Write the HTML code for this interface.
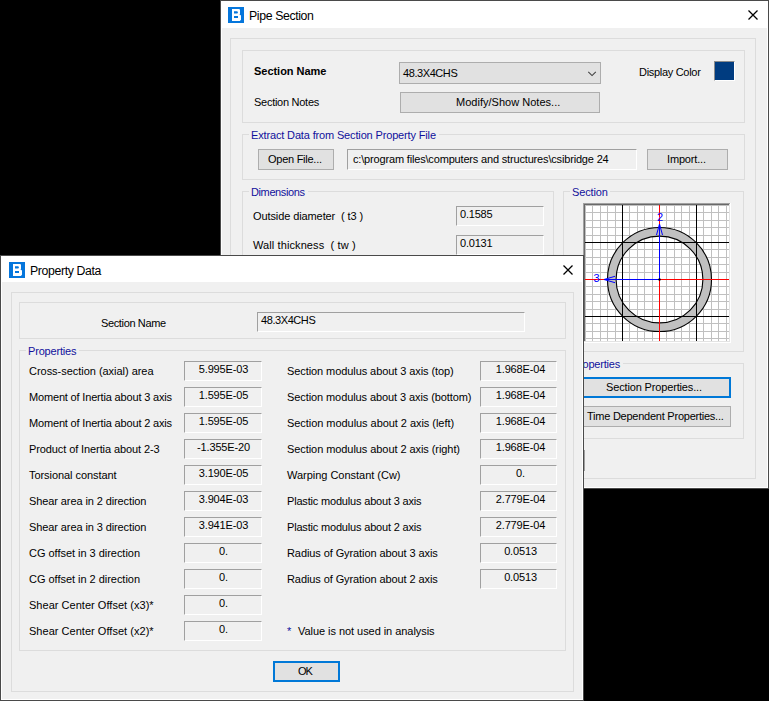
<!DOCTYPE html><html><head><meta charset="utf-8"><style>
*{box-sizing:border-box}
html,body{margin:0;padding:0;width:769px;height:701px;overflow:hidden;background:#000;position:relative}
div{position:absolute}
.t{font-family:"Liberation Sans",sans-serif;font-size:11px;line-height:13px;white-space:pre;color:#000}
.g{border:1px solid #dcdcdc}
.btn{background:#e1e1e1;border:1px solid #adadad}
.def{background:#e1e1e1;border:2px solid #0078d7}
.sunk{background:#f0f0f0;border-top:1px solid #a0a0a0;border-left:1px solid #a0a0a0;border-bottom:1px solid #fff;border-right:1px solid #fff}
.lbgap{background:#f0f0f0;height:3px}
</style></head><body>
<div class="" style="left:220px;top:0px;width:549px;height:489px;background:#fff;border:1px solid #4a4a4a"></div>
<div class="" style="left:222px;top:28px;width:545px;height:459px;background:#f0f0f0"></div>
<svg style="position:absolute;left:228px;top:7px" width="16" height="16" viewBox="0 0 16 16"><rect width="16" height="16" fill="#0576dc"/><path fill="#fff" fill-rule="evenodd" d="M4 2H11.2L12 2.8V6.8L11.5 7.4L13 8.6V12.8L11.8 14H4ZM6 4.3H9.3L10 5.45L9.3 6.6H6ZM6 9.1H10V11H6Z"/></svg>
<div class="t" style="left:249px;top:10px;font-size:12.3px;letter-spacing:-0.38px;">Pipe Section</div>
<svg style="position:absolute;left:747px;top:9px" width="12" height="12" viewBox="0 0 12 12"><path d="M1.5 1.5L10.5 10.5M10.5 1.5L1.5 10.5" stroke="#000" stroke-width="1.25"/></svg>
<div class="g" style="left:230px;top:38px;width:526px;height:441px;"></div>
<div class="g" style="left:242px;top:50px;width:503px;height:73px;"></div>
<div class="t" style="left:254px;top:65px;font-weight:700;letter-spacing:-0.03px;">Section Name</div>
<div class="t" style="left:254px;top:96px;letter-spacing:-0.27px;">Section Notes</div>
<div class="" style="left:399px;top:62px;width:202px;height:22px;background:#e1e1e1;border:1px solid #adadad"></div>
<div class="t" style="left:403px;top:67px;letter-spacing:-0.42px;">48.3X4CHS</div>
<svg style="position:absolute;left:586px;top:70px" width="12" height="8" viewBox="0 0 12 8"><path d="M2.3 1.9L6.05 5.6L9.8 1.9" fill="none" stroke="#404040" stroke-width="1.05"/></svg>
<div class="btn" style="left:400px;top:92px;width:200px;height:21px;"></div>
<div class="t" style="left:456px;top:96px;letter-spacing:0.02px;">Modify/Show Notes...</div>
<div class="t" style="left:639px;top:66px;letter-spacing:-0.30px;">Display Color</div>
<div class="" style="left:714px;top:61px;width:21px;height:20px;background:#003c80;border-left:1px solid #8c8c8c;border-top:1px solid #8c8c8c;border-right:1px solid #fff;border-bottom:1px solid #fff"></div>
<div class="g" style="left:242px;top:134px;width:503px;height:46px;"></div>
<div class="lbgap" style="left:249px;top:133px;width:190px"></div>
<div class="t" style="left:251px;top:129px;color:#10109c;letter-spacing:-0.15px;">Extract Data from Section Property File</div>
<div class="btn" style="left:258px;top:149px;width:76px;height:21px;"></div>
<div class="t" style="left:268px;top:153px;letter-spacing:-0.26px;">Open File...</div>
<div class="sunk" style="left:347px;top:149px;width:290px;height:21px;"></div>
<div class="t" style="left:353px;top:153px;letter-spacing:-0.17px;">c:\program files\computers and structures\csibridge 24</div>
<div class="btn" style="left:647px;top:149px;width:81px;height:21px;"></div>
<div class="t" style="left:667px;top:153px;letter-spacing:-0.17px;">Import...</div>
<div class="g" style="left:242px;top:191px;width:312px;height:110px;"></div>
<div class="lbgap" style="left:249px;top:190px;width:59px"></div>
<div class="t" style="left:251px;top:186px;color:#10109c;letter-spacing:-0.39px;">Dimensions</div>
<div class="t" style="left:253px;top:210px;letter-spacing:-0.10px;">Outside diameter  ( t3 )</div>
<div class="t" style="left:253px;top:239px;letter-spacing:0.10px;">Wall thickness  ( tw )</div>
<div class="sunk" style="left:456px;top:206px;width:88px;height:20px;"></div>
<div class="t" style="left:460px;top:208px;letter-spacing:-0.20px;">0.1585</div>
<div class="sunk" style="left:456px;top:235px;width:88px;height:20px;"></div>
<div class="t" style="left:460px;top:237px;letter-spacing:-0.20px;">0.0131</div>
<div class="g" style="left:563px;top:191px;width:181px;height:161px;"></div>
<div class="lbgap" style="left:570px;top:190px;width:40px"></div>
<div class="t" style="left:572px;top:186px;color:#10109c;letter-spacing:-0.15px;">Section</div>
<svg style="position:absolute;left:583px;top:203px" width="148" height="140" viewBox="583 203 148 140"><rect x="583" y="203" width="148" height="140" fill="#fff"/><defs><clipPath id="cl"><rect x="585" y="205" width="144" height="136"/></clipPath></defs><g clip-path="url(#cl)" shape-rendering="crispEdges"><rect x="570" y="203" width="1" height="140" fill="#c0c0c0"/><rect x="583" y="190" width="148" height="1" fill="#c0c0c0"/><rect x="578" y="203" width="1" height="140" fill="#c0c0c0"/><rect x="583" y="198" width="148" height="1" fill="#c0c0c0"/><rect x="585" y="203" width="1" height="140" fill="#c0c0c0"/><rect x="583" y="205" width="148" height="1" fill="#c0c0c0"/><rect x="592" y="203" width="1" height="140" fill="#c0c0c0"/><rect x="583" y="212" width="148" height="1" fill="#c0c0c0"/><rect x="600" y="203" width="1" height="140" fill="#c0c0c0"/><rect x="583" y="220" width="148" height="1" fill="#c0c0c0"/><rect x="607" y="203" width="1" height="140" fill="#c0c0c0"/><rect x="583" y="227" width="148" height="1" fill="#c0c0c0"/><rect x="615" y="203" width="1" height="140" fill="#c0c0c0"/><rect x="583" y="235" width="148" height="1" fill="#c0c0c0"/><rect x="622" y="203" width="1" height="140" fill="#c0c0c0"/><rect x="583" y="242" width="148" height="1" fill="#c0c0c0"/><rect x="629" y="203" width="1" height="140" fill="#c0c0c0"/><rect x="583" y="249" width="148" height="1" fill="#c0c0c0"/><rect x="637" y="203" width="1" height="140" fill="#c0c0c0"/><rect x="583" y="257" width="148" height="1" fill="#c0c0c0"/><rect x="644" y="203" width="1" height="140" fill="#c0c0c0"/><rect x="583" y="264" width="148" height="1" fill="#c0c0c0"/><rect x="652" y="203" width="1" height="140" fill="#c0c0c0"/><rect x="583" y="272" width="148" height="1" fill="#c0c0c0"/><rect x="659" y="203" width="1" height="140" fill="#c0c0c0"/><rect x="583" y="279" width="148" height="1" fill="#c0c0c0"/><rect x="666" y="203" width="1" height="140" fill="#c0c0c0"/><rect x="583" y="286" width="148" height="1" fill="#c0c0c0"/><rect x="674" y="203" width="1" height="140" fill="#c0c0c0"/><rect x="583" y="294" width="148" height="1" fill="#c0c0c0"/><rect x="681" y="203" width="1" height="140" fill="#c0c0c0"/><rect x="583" y="301" width="148" height="1" fill="#c0c0c0"/><rect x="689" y="203" width="1" height="140" fill="#c0c0c0"/><rect x="583" y="309" width="148" height="1" fill="#c0c0c0"/><rect x="696" y="203" width="1" height="140" fill="#c0c0c0"/><rect x="583" y="316" width="148" height="1" fill="#c0c0c0"/><rect x="703" y="203" width="1" height="140" fill="#c0c0c0"/><rect x="583" y="323" width="148" height="1" fill="#c0c0c0"/><rect x="711" y="203" width="1" height="140" fill="#c0c0c0"/><rect x="583" y="331" width="148" height="1" fill="#c0c0c0"/><rect x="718" y="203" width="1" height="140" fill="#c0c0c0"/><rect x="583" y="338" width="148" height="1" fill="#c0c0c0"/><rect x="726" y="203" width="1" height="140" fill="#c0c0c0"/><rect x="583" y="346" width="148" height="1" fill="#c0c0c0"/><rect x="733" y="203" width="1" height="140" fill="#c0c0c0"/><rect x="583" y="353" width="148" height="1" fill="#c0c0c0"/><rect x="740" y="203" width="1" height="140" fill="#c0c0c0"/><rect x="583" y="360" width="148" height="1" fill="#c0c0c0"/><rect x="748" y="203" width="1" height="140" fill="#c0c0c0"/><rect x="583" y="368" width="148" height="1" fill="#c0c0c0"/></g><g clip-path="url(#cl)"><path d="M659.5 279.5 m-52 0 a52 52 0 1 0 104 0 a52 52 0 1 0 -104 0 Z M659.5 279.5 m-43.4 0 a43.4 43.4 0 1 1 86.8 0 a43.4 43.4 0 1 1 -86.8 0 Z" fill="#c0c0c0" fill-rule="evenodd"/><circle cx="659.5" cy="279.5" r="52" fill="none" stroke="#000" stroke-width="1.1"/><circle cx="659.5" cy="279.5" r="43.4" fill="none" stroke="#000" stroke-width="1.1"/></g><g shape-rendering="crispEdges"><rect x="622" y="205" width="1" height="136" fill="#000"/><rect x="696" y="205" width="1" height="136" fill="#000"/><rect x="585" y="242" width="144" height="1" fill="#000"/><rect x="585" y="316" width="144" height="1" fill="#000"/><rect x="659" y="205" width="1" height="136" fill="#f00"/><rect x="585" y="279" width="144" height="1" fill="#f00"/><rect x="659" y="224" width="1" height="56" fill="#00f"/><rect x="604" y="279" width="56" height="1" fill="#00f"/></g><path d="M656.5 235 L659.5 224 L662.5 235 M615 276.3 L604 279.5 L615 282.7" fill="none" stroke="#00f" stroke-width="1"/><circle cx="659.5" cy="279.5" r="1.2" fill="#000"/><text x="657" y="221" font-family="Liberation Sans" font-size="11" fill="#00f">2</text><text x="593.5" y="282" font-family="Liberation Sans" font-size="11" fill="#00f">3</text><g shape-rendering="crispEdges"><rect x="583" y="203" width="148" height="1" fill="#a0a0a0"/><rect x="583" y="203" width="1" height="140" fill="#a0a0a0"/><rect x="583" y="342" width="148" height="1" fill="#fff"/><rect x="730" y="203" width="1" height="140" fill="#fff"/><rect x="584" y="204" width="146" height="1" fill="#696969"/><rect x="584" y="204" width="1" height="138" fill="#696969"/><rect x="584" y="341" width="146" height="1" fill="#e3e3e3"/><rect x="729" y="204" width="1" height="138" fill="#e3e3e3"/></g></svg>
<div class="g" style="left:563px;top:363px;width:181px;height:76px;"></div>
<div class="lbgap" style="left:569px;top:362px;width:54px"></div>
<div class="t" style="left:572px;top:358px;color:#10109c;letter-spacing:-0.22px;">Properties</div>
<div class="def" style="left:574px;top:377px;width:157px;height:21px;"></div>
<div class="t" style="left:606px;top:381px;letter-spacing:-0.15px;">Section Properties...</div>
<div class="btn" style="left:574px;top:406px;width:157px;height:21px;"></div>
<div class="t" style="left:587px;top:410px;letter-spacing:-0.24px;">Time Dependent Properties...</div>
<div class="" style="left:584px;top:450px;width:1px;height:21px;background:#a0a0a0"></div>
<div class="" style="left:0px;top:255px;width:584px;height:446px;background:#fff;border:1px solid #4a4a4a"></div>
<div class="" style="left:2px;top:282px;width:580px;height:417px;background:#f0f0f0"></div>
<svg style="position:absolute;left:9px;top:262px" width="16" height="16" viewBox="0 0 16 16"><rect width="16" height="16" fill="#0576dc"/><path fill="#fff" fill-rule="evenodd" d="M4 2H11.2L12 2.8V6.8L11.5 7.4L13 8.6V12.8L11.8 14H4ZM6 4.3H9.3L10 5.45L9.3 6.6H6ZM6 9.1H10V11H6Z"/></svg>
<div class="t" style="left:30px;top:265px;font-size:12.3px;letter-spacing:-0.38px;">Property Data</div>
<svg style="position:absolute;left:562px;top:264px" width="12" height="12" viewBox="0 0 12 12"><path d="M1.5 1.5L10.5 10.5M10.5 1.5L1.5 10.5" stroke="#000" stroke-width="1.25"/></svg>
<div class="g" style="left:11px;top:292px;width:563px;height:400px;"></div>
<div class="g" style="left:19px;top:302px;width:547px;height:37px;"></div>
<div class="t" style="left:101px;top:317px;letter-spacing:-0.36px;">Section Name</div>
<div class="sunk" style="left:257px;top:312px;width:268px;height:20px;"></div>
<div class="t" style="left:261px;top:314px;letter-spacing:-0.42px;">48.3X4CHS</div>
<div class="g" style="left:19px;top:350px;width:547px;height:301px;"></div>
<div class="lbgap" style="left:26px;top:349px;width:53px"></div>
<div class="t" style="left:28px;top:345px;color:#10109c;letter-spacing:-0.18px;">Properties</div>
<div class="t" style="left:29px;top:365px;letter-spacing:-0.03px;">Cross-section (axial) area</div>
<div class="sunk" style="left:184px;top:361px;width:78px;height:20px;"></div>
<div class="t" style="left:29px;top:391px;letter-spacing:-0.17px;">Moment of Inertia about 3 axis</div>
<div class="sunk" style="left:184px;top:387px;width:78px;height:20px;"></div>
<div class="t" style="left:29px;top:417px;letter-spacing:-0.17px;">Moment of Inertia about 2 axis</div>
<div class="sunk" style="left:184px;top:413px;width:78px;height:20px;"></div>
<div class="t" style="left:29px;top:443px;letter-spacing:-0.10px;">Product of Inertia about 2-3</div>
<div class="sunk" style="left:184px;top:439px;width:78px;height:20px;"></div>
<div class="t" style="left:29px;top:469px;letter-spacing:-0.06px;">Torsional constant</div>
<div class="sunk" style="left:184px;top:465px;width:78px;height:20px;"></div>
<div class="t" style="left:29px;top:495px;letter-spacing:-0.10px;">Shear area in 2 direction</div>
<div class="sunk" style="left:184px;top:491px;width:78px;height:20px;"></div>
<div class="t" style="left:29px;top:521px;letter-spacing:-0.10px;">Shear area in 3 direction</div>
<div class="sunk" style="left:184px;top:517px;width:78px;height:20px;"></div>
<div class="t" style="left:29px;top:547px;letter-spacing:-0.03px;">CG offset in 3 direction</div>
<div class="sunk" style="left:184px;top:543px;width:78px;height:20px;"></div>
<div class="t" style="left:29px;top:573px;letter-spacing:-0.03px;">CG offset in 2 direction</div>
<div class="sunk" style="left:184px;top:569px;width:78px;height:20px;"></div>
<div class="t" style="left:29px;top:599px;letter-spacing:0.03px;">Shear Center Offset (x3)*</div>
<div class="sunk" style="left:184px;top:595px;width:78px;height:20px;"></div>
<div class="t" style="left:29px;top:625px;letter-spacing:0.03px;">Shear Center Offset (x2)*</div>
<div class="sunk" style="left:184px;top:621px;width:78px;height:20px;"></div>
<div class="t" style="left:287px;top:365px;letter-spacing:-0.08px;">Section modulus about 3 axis (top)</div>
<div class="sunk" style="left:480px;top:361px;width:77px;height:20px;"></div>
<div class="t" style="left:287px;top:391px;letter-spacing:-0.09px;">Section modulus about 3 axis (bottom)</div>
<div class="sunk" style="left:480px;top:387px;width:77px;height:20px;"></div>
<div class="t" style="left:287px;top:417px;letter-spacing:-0.05px;">Section modulus about 2 axis (left)</div>
<div class="sunk" style="left:480px;top:413px;width:77px;height:20px;"></div>
<div class="t" style="left:287px;top:443px;letter-spacing:-0.07px;">Section modulus about 2 axis (right)</div>
<div class="sunk" style="left:480px;top:439px;width:77px;height:20px;"></div>
<div class="t" style="left:287px;top:469px;letter-spacing:-0.02px;">Warping Constant (Cw)</div>
<div class="sunk" style="left:480px;top:465px;width:77px;height:20px;"></div>
<div class="t" style="left:287px;top:495px;letter-spacing:-0.18px;">Plastic modulus about 3 axis</div>
<div class="sunk" style="left:480px;top:491px;width:77px;height:20px;"></div>
<div class="t" style="left:287px;top:521px;letter-spacing:-0.18px;">Plastic modulus about 2 axis</div>
<div class="sunk" style="left:480px;top:517px;width:77px;height:20px;"></div>
<div class="t" style="left:287px;top:547px;letter-spacing:-0.09px;">Radius of Gyration about 3 axis</div>
<div class="sunk" style="left:480px;top:543px;width:77px;height:20px;"></div>
<div class="t" style="left:287px;top:573px;letter-spacing:-0.09px;">Radius of Gyration about 2 axis</div>
<div class="sunk" style="left:480px;top:569px;width:77px;height:20px;"></div>
<div class="t" style="left:287px;top:625px;color:#10109c;">*</div>
<div class="t" style="left:298px;top:625px;letter-spacing:-0.05px;">Value is not used in analysis</div>
<div class="t" style="left:163.5px;width:120px;text-align:center;top:363px;letter-spacing:-0.15px">5.995E-03</div>
<div class="t" style="left:163.5px;width:120px;text-align:center;top:389px;letter-spacing:-0.15px">1.595E-05</div>
<div class="t" style="left:163.5px;width:120px;text-align:center;top:415px;letter-spacing:-0.15px">1.595E-05</div>
<div class="t" style="left:163.5px;width:120px;text-align:center;top:441px;letter-spacing:-0.15px">-1.355E-20</div>
<div class="t" style="left:163.5px;width:120px;text-align:center;top:467px;letter-spacing:-0.15px">3.190E-05</div>
<div class="t" style="left:163.5px;width:120px;text-align:center;top:493px;letter-spacing:-0.15px">3.904E-03</div>
<div class="t" style="left:163.5px;width:120px;text-align:center;top:519px;letter-spacing:-0.15px">3.941E-03</div>
<div class="t" style="left:163.5px;width:120px;text-align:center;top:545px;letter-spacing:-0.15px">0.</div>
<div class="t" style="left:163.5px;width:120px;text-align:center;top:571px;letter-spacing:-0.15px">0.</div>
<div class="t" style="left:163.5px;width:120px;text-align:center;top:597px;letter-spacing:-0.15px">0.</div>
<div class="t" style="left:163.5px;width:120px;text-align:center;top:623px;letter-spacing:-0.15px">0.</div>
<div class="t" style="left:460.5px;width:120px;text-align:center;top:363px;letter-spacing:-0.15px">1.968E-04</div>
<div class="t" style="left:460.5px;width:120px;text-align:center;top:389px;letter-spacing:-0.15px">1.968E-04</div>
<div class="t" style="left:460.5px;width:120px;text-align:center;top:415px;letter-spacing:-0.15px">1.968E-04</div>
<div class="t" style="left:460.5px;width:120px;text-align:center;top:441px;letter-spacing:-0.15px">1.968E-04</div>
<div class="t" style="left:460.5px;width:120px;text-align:center;top:467px;letter-spacing:-0.15px">0.</div>
<div class="t" style="left:460.5px;width:120px;text-align:center;top:493px;letter-spacing:-0.15px">2.779E-04</div>
<div class="t" style="left:460.5px;width:120px;text-align:center;top:519px;letter-spacing:-0.15px">2.779E-04</div>
<div class="t" style="left:460.5px;width:120px;text-align:center;top:545px;letter-spacing:-0.15px">0.0513</div>
<div class="t" style="left:460.5px;width:120px;text-align:center;top:571px;letter-spacing:-0.15px">0.0513</div>
<div class="def" style="left:273px;top:661px;width:67px;height:21px;"></div>
<div class="t" style="left:298px;top:665px;letter-spacing:-1.00px;">OK</div>
</body></html>
